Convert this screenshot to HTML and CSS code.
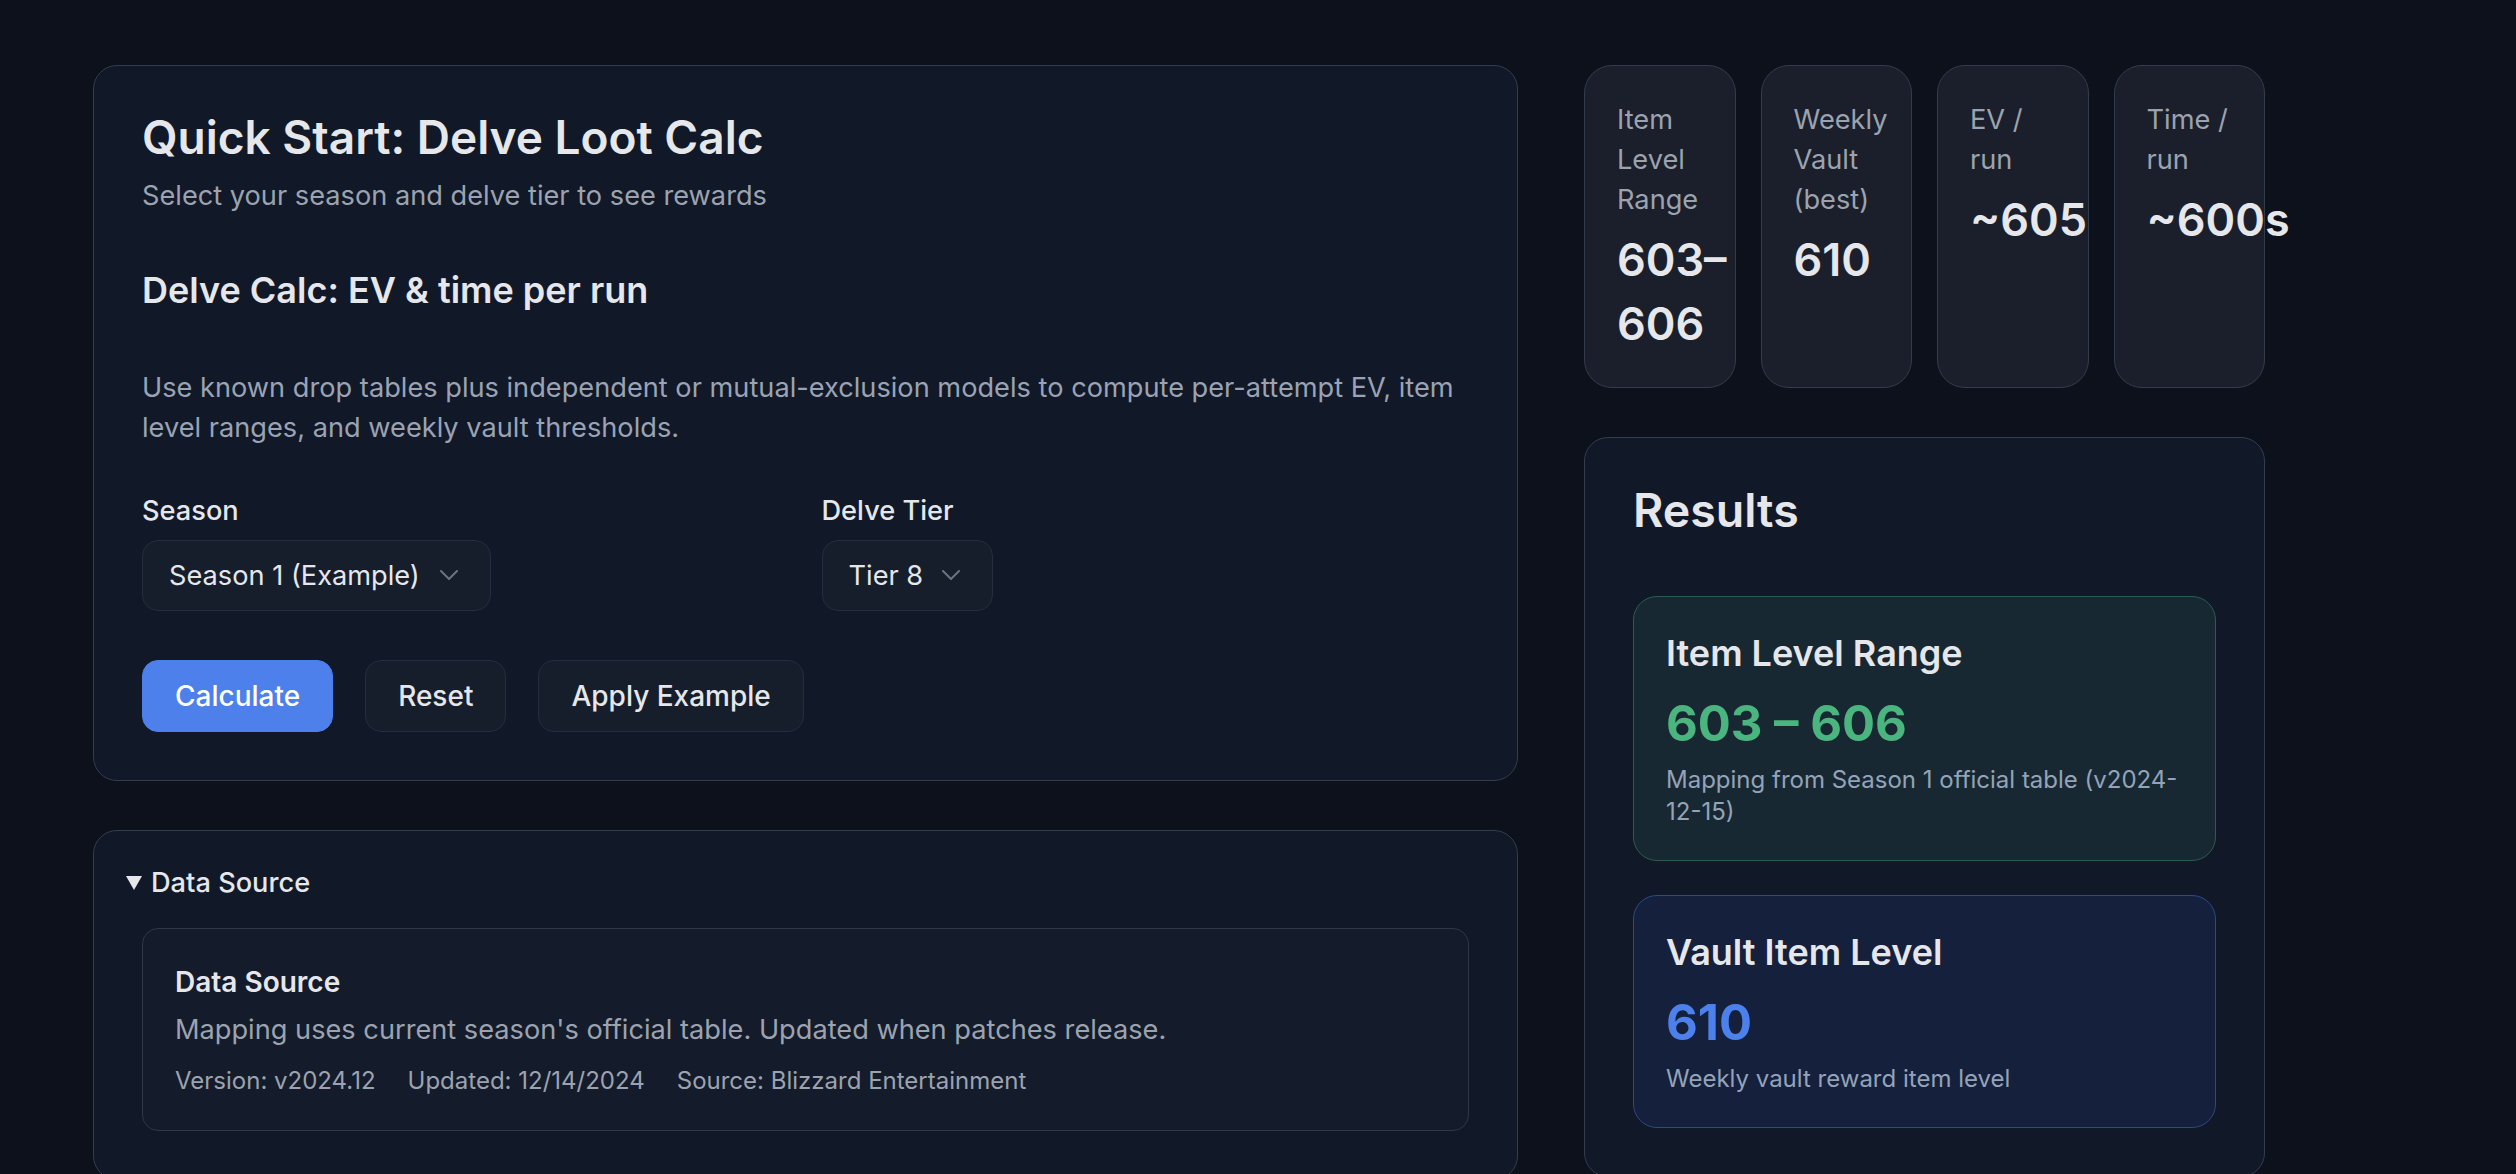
FILE: index.html
```html
<!DOCTYPE html>
<html lang="en">
<head>
    <meta charset="UTF-8">
    <meta name="viewport" content="width=device-width, initial-scale=1.0">
    <title>Delve Loot Calc</title>
    <link rel="stylesheet" href="styles.css">
</head>
<body>
    <main class="layout">
        <div class="main-col">
            <!-- Quick start -->
            <section class="card hero">
                <h1>Quick Start: Delve Loot Calc</h1>
                <p class="subtitle">Select your season and delve tier to see rewards</p>

                <h2>Delve Calc: EV &amp; time per run</h2>
                <p class="lead">Use known drop tables plus independent or mutual-exclusion models to compute per-attempt EV, item level ranges, and weekly vault thresholds.</p>

                <div class="fields">
                    <div class="field">
                        <label>Season</label>
                        <div class="select select-season">
                            <span>Season 1 (Example)</span>
                            <svg class="chevron" viewBox="0 0 18 10" width="18" height="10"><path d="M1 1l8 8 8-8" fill="none" stroke="currentColor" stroke-width="2" stroke-linecap="round" stroke-linejoin="round"/></svg>
                        </div>
                    </div>
                    <div class="field">
                        <label>Delve Tier</label>
                        <div class="select select-tier">
                            <span>Tier 8</span>
                            <svg class="chevron" viewBox="0 0 18 10" width="18" height="10"><path d="M1 1l8 8 8-8" fill="none" stroke="currentColor" stroke-width="2" stroke-linecap="round" stroke-linejoin="round"/></svg>
                        </div>
                    </div>
                </div>

                <div class="actions">
                    <button class="btn btn-primary">Calculate</button>
                    <button class="btn">Reset</button>
                    <button class="btn">Apply Example</button>
                </div>
            </section>

            <!-- Datenquelle -->
            <details class="card source" open>
                <summary>Data Source</summary>
                <div class="source-box">
                    <h3>Data Source</h3>
                    <p>Mapping uses current season's official table. Updated when patches release.</p>
                    <div class="meta">
                        <span>Version: v2024.12</span>
                        <span>Updated: 12/14/2024</span>
                        <span>Source: Blizzard Entertainment</span>
                    </div>
                </div>
            </details>
        </div>

        <aside class="side-col">
            <div class="stats">
                <div class="stat">
                    <div class="stat-label">Item Level Range</div>
                    <div class="stat-value">603–606</div>
                </div>
                <div class="stat">
                    <div class="stat-label">Weekly Vault (best)</div>
                    <div class="stat-value">610</div>
                </div>
                <div class="stat">
                    <div class="stat-label">EV / run</div>
                    <div class="stat-value">~605</div>
                </div>
                <div class="stat">
                    <div class="stat-label">Time / run</div>
                    <div class="stat-value">~600s</div>
                </div>
            </div>

            <section class="card results">
                <h2>Results</h2>
                <div class="result result-green">
                    <h3>Item Level Range</h3>
                    <div class="result-value">603 – 606</div>
                    <p>Mapping from Season 1 official table (v2024-12-15)</p>
                </div>
                <div class="result result-blue">
                    <h3>Vault Item Level</h3>
                    <div class="result-value">610</div>
                    <p>Weekly vault reward item level</p>
                </div>
            </section>
        </aside>
    </main>
</body>
</html>
```
FILE: styles.css
```css
body {
    margin: 0;
    background-color: #0c111b;
    color: #e5e7eb;
    font-family: Inter, "Noto Sans", sans-serif;
}
h1, h2, h3, p {
    margin: 0;
}

.layout {
    display: grid;
    grid-template-columns: 1425px 681px;
    column-gap: 66px;
    align-items: start;
    padding: 65px 93px 0;
}
.main-col,
.side-col {
    display: flex;
    flex-direction: column;
    gap: 49px;
}

.card {
    background-color: #111827;
    border: 1px solid #343d4f;
    border-radius: 24px;
}

/* Quick start */
.hero {
    padding: 47px 48px 48px;
}
.hero h1 {
    font-size: 46px;
    line-height: 48px;
    font-weight: 600;
}
.subtitle {
    margin-top: 16px;
    font-size: 27.2px;
    line-height: 37.5px;
    color: #9ca3af;
}
.hero h2 {
    margin-top: 53px;
    font-size: 36px;
    line-height: 45px;
    font-weight: 600;
}
.lead {
    margin-top: 55px;
    font-size: 27.2px;
    line-height: 40px;
    color: #9aa3b4;
}

.fields {
    display: grid;
    grid-template-columns: 1fr 1fr;
    gap: 32px;
    margin-top: 43px;
}
.field label {
    display: block;
    font-size: 27.2px;
    line-height: 39px;
    font-weight: 500;
}
.select {
    display: flex;
    align-items: center;
    justify-content: space-between;
    box-sizing: border-box;
    height: 71px;
    margin-top: 10px;
    padding: 0 32px 0 26px;
    background-color: #161d2b;
    border: 1px solid #252e3e;
    border-radius: 16px;
    font-size: 27.2px;
    color: #e5e7eb;
}
.select-season {
    width: 349px;
}
.select-tier {
    width: 171px;
}
.chevron {
    color: #6b7280;
    flex: none;
}

.actions {
    display: flex;
    gap: 32px;
    margin-top: 49px;
}
.btn {
    height: 72px;
    padding: 0 32px;
    font-family: inherit;
    font-size: 28px;
    font-weight: 500;
    color: #e5e7eb;
    background-color: #161d2b;
    border: 1px solid #252e3e;
    border-radius: 16px;
}
.btn-primary {
    background-color: #4d80ea;
    border-color: #4d80ea;
    color: #fff;
}

/* Data source */
.source {
    padding: 32px;
}
.source summary {
    display: flex;
    align-items: center;
    gap: 9px;
    list-style: none;
    font-size: 27.2px;
    line-height: 40px;
    font-weight: 500;
    cursor: pointer;
}
.source summary::-webkit-details-marker {
    display: none;
}
.source summary::before {
    content: "";
    border-left: 8px solid transparent;
    border-right: 8px solid transparent;
    border-top: 14px solid #e5e7eb;
}
.source-box {
    margin: 25px 16px 16px;
    padding: 32px;
    background-color: #141b2b;
    border: 1px solid #2f3848;
    border-radius: 16px;
}
.source-box h3 {
    font-size: 28px;
    line-height: 42px;
    font-weight: 600;
}
.source-box p {
    margin-top: 7px;
    font-size: 27.2px;
    line-height: 40px;
    color: #9ca3af;
}
.meta {
    display: flex;
    gap: 32px;
    margin-top: 14px;
    font-size: 24px;
    line-height: 34px;
    color: #9ca3af;
}

/* Kennzahlen */
.stats {
    display: grid;
    grid-template-columns: repeat(4, 1fr);
    gap: 25px;
}
.stat {
    padding: 34px 32px 31px;
    background-color: #1a1f2b;
    border: 1px solid #333c4d;
    border-radius: 28px;
    min-width: 0;
}
.stat-label {
    font-size: 27.2px;
    line-height: 40px;
    color: #9ca3af;
}
.stat-value {
    margin-top: 8px;
    font-size: 45px;
    line-height: 64px;
    font-weight: 600;
    color: #e5e7eb;
}

/* Ergebnisse */
.results {
    padding: 48px;
}
.results h2 {
    font-size: 46.5px;
    line-height: 48px;
    font-weight: 600;
    margin-bottom: 62px;
}
.result {
    padding: 32px;
    border: 1px solid;
    border-radius: 24px;
}
.result + .result {
    margin-top: 34px;
}
.result h3 {
    font-size: 36px;
    line-height: 48px;
    font-weight: 600;
}
.result-value {
    margin-top: 17px;
    font-size: 49px;
    line-height: 60px;
    font-weight: 700;
}
.result p {
    margin-top: 10px;
    font-size: 24px;
    line-height: 32px;
    color: #94a3b8;
}
.result-green {
    background-color: #172832;
    border-color: #2c5d4c;
}
.result-green .result-value {
    color: #4ab57f;
}
.result-blue {
    background-color: #15203c;
    border-color: #2b4a86;
}
.result-blue .result-value {
    color: #4c80ea;
}
```
